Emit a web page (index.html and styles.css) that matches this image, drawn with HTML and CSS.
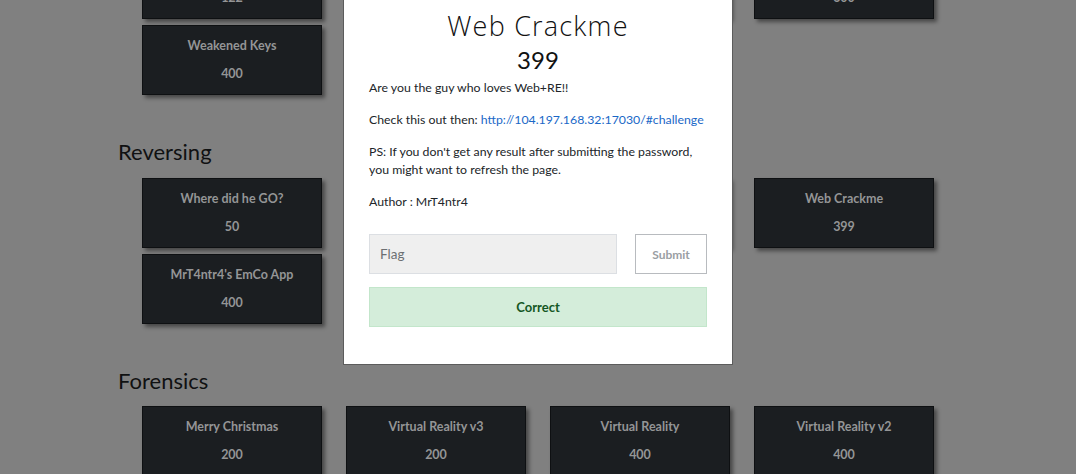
FILE: index.html
```html
<!DOCTYPE html>
<html>
<head>
<meta charset="utf-8">
<link rel="stylesheet" href="styles.css">
</head>
<body>
<div class="page">
  <div class="container">
    <div class="grid first">
      <div class="card"><div class="c-name">Easy Crypto</div><div class="c-pts">122</div></div>
      <div class="card"><div class="c-name">Crypto 2</div><div class="c-pts">200</div></div>
      <div class="card"><div class="c-name">Crypto 3</div><div class="c-pts">250</div></div>
      <div class="card"><div class="c-name">Crypto 4</div><div class="c-pts">300</div></div>
      <div class="card"><div class="c-name">Weakened Keys</div><div class="c-pts">400</div></div>
    </div>
    <h2 class="cat">Reversing</h2>
    <div class="grid">
      <div class="card"><div class="c-name">Where did he GO?</div><div class="c-pts">50</div></div>
      <div class="card"><div class="c-name">Reversing 2</div><div class="c-pts">100</div></div>
      <div class="card"><div class="c-name">Reversing 3</div><div class="c-pts">200</div></div>
      <div class="card"><div class="c-name">Web Crackme</div><div class="c-pts">399</div></div>
      <div class="card"><div class="c-name">MrT4ntr4's EmCo App</div><div class="c-pts">400</div></div>
    </div>
    <h2 class="cat cat-last">Forensics</h2>
    <div class="grid">
      <div class="card"><div class="c-name">Merry Christmas</div><div class="c-pts">200</div></div>
      <div class="card"><div class="c-name">Virtual Reality v3</div><div class="c-pts">200</div></div>
      <div class="card"><div class="c-name">Virtual Reality</div><div class="c-pts">400</div></div>
      <div class="card"><div class="c-name">Virtual Reality v2</div><div class="c-pts">400</div></div>
    </div>
  </div>
</div>
<div class="modal">
  <h1 class="m-title">Web Crackme</h1>
  <div class="m-pts">399</div>
  <div class="m-desc">
    <p>Are you the guy who loves Web+RE!!</p>
    <p>Check this out then: <a href="#">http://104.197.168.32:17030/#challenge</a></p>
    <p>PS: If you don't get any result after submitting the password, you might want to refresh the page.</p>
    <p>Author : MrT4ntr4</p>
  </div>
  <div class="m-form">
    <input class="flag" type="text" placeholder="Flag">
    <button class="submit">Submit</button>
  </div>
  <div class="result">Correct</div>
</div>
</body>
</html>
```
FILE: styles.css
```css
html, body {
  margin: 0;
  padding: 0;
  height: 100%;
  overflow: hidden;
  background: #808080;
  font-family: Lato, "Liberation Sans", sans-serif;
}
.page {
  margin-top: -51px;
}
.container {
  width: 840px;
  margin: 0 auto;
}
.grid {
  display: grid;
  grid-template-columns: repeat(4, 180px);
  column-gap: 24px;
  row-gap: 6px;
  padding: 0 24px;
}
.card {
  box-sizing: border-box;
  height: 70px;
  background: #1b1e21;
  border: 1px solid #0e1012;
  box-shadow: 3px 3px 4px rgba(0, 0, 0, 0.45);
  display: flex;
  flex-direction: column;
  align-items: center;
  padding-top: 13px;
  gap: 14px;
  color: #949596;
  font-weight: 700;
  font-size: 12.5px;
  line-height: 14px;
}
.cat {
  margin: 44px 0 13px;
  font-weight: 400;
  font-size: 22px;
  line-height: 26px;
  color: #101112;
}
.cat-last {
  margin-bottom: 12px;
}
.modal {
  position: fixed;
  top: -10px;
  left: 0;
  right: 0;
  margin: 0 auto;
  width: 390px;
  box-sizing: border-box;
  background: #fff;
  border: 1px solid #5c5c5c;
  padding: 18px 25px 37px;
  color: #212529;
}
.m-title {
  margin: 0;
  text-align: center;
  font-family: "Open Sans", sans-serif;
  font-weight: 300;
  font-size: 27px;
  letter-spacing: 1.2px;
  line-height: 34px;
  color: #111;
}
.m-pts {
  margin-top: 3px;
  text-align: center;
  font-size: 24px;
  line-height: 28px;
  color: #111;
}
.m-desc {
  margin-top: 5px;
  font-size: 12.3px;
  line-height: 18px;
}
.m-desc p {
  margin: 0 0 14px;
}
.m-desc p:last-child {
  margin-bottom: 0;
}
.m-desc a {
  color: #1a68c7;
  text-decoration: none;
}
.m-form {
  margin-top: 23px;
  display: flex;
  justify-content: space-between;
}
.flag {
  box-sizing: border-box;
  width: 248px;
  height: 40px;
  background: #efefef;
  border: 1px solid #dcdfe3;
  padding: 0 10px;
  font-family: Lato, sans-serif;
  font-size: 13.5px;
  color: #495057;
  outline: none;
}
.flag::placeholder {
  color: #6c6f73;
}
.submit {
  box-sizing: border-box;
  width: 72px;
  height: 40px;
  background: #fff;
  border: 1px solid #b8bbbf;
  font-family: Lato, sans-serif;
  font-weight: 700;
  font-size: 12px;
  color: #9a9ea3;
}
.result {
  margin-top: 13px;
  box-sizing: border-box;
  height: 40px;
  background: #d4edda;
  border: 1px solid #c3e6cb;
  display: flex;
  align-items: center;
  justify-content: center;
  font-weight: 700;
  font-size: 13px;
  color: #155724;
}
```
